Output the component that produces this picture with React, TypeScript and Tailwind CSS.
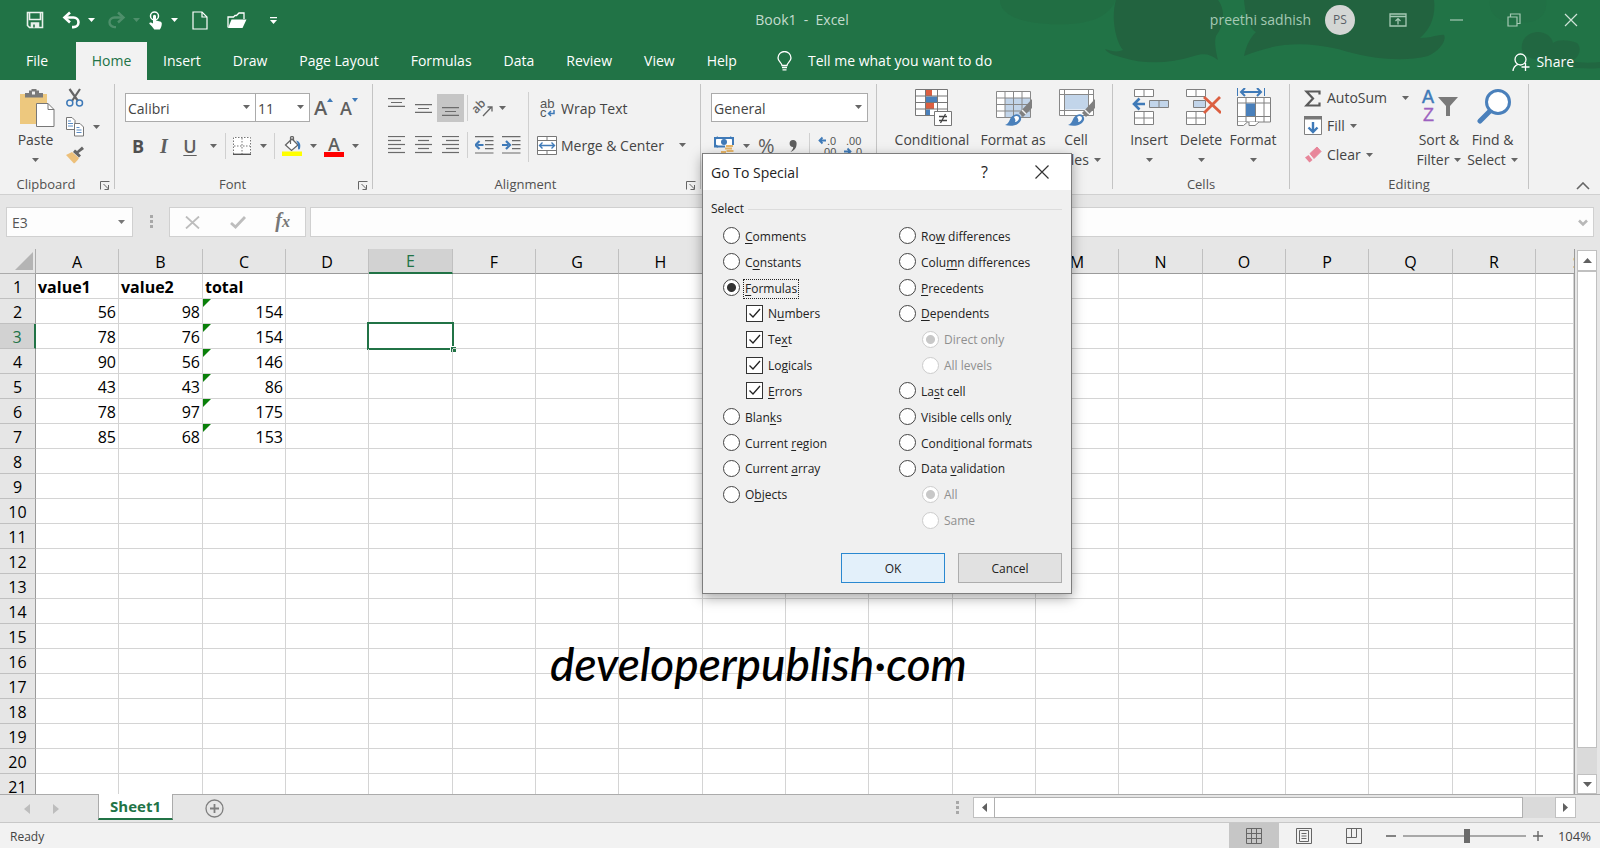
import { useState } from 'react'
import type { ReactNode } from 'react'

const COLUMNS = ['A', 'B', 'C', 'D', 'E', 'F', 'G', 'H', 'I', 'J', 'K', 'L', 'M', 'N', 'O', 'P', 'Q', 'R', 'S']
const ROWS = Array.from({ length: 21 }, (_, i) => i + 1)

const DATA: Record<number, string[]> = {
  1: ['value1', 'value2', 'total'],
  2: ['56', '98', '154'],
  3: ['78', '76', '154'],
  4: ['90', '56', '146'],
  5: ['43', '43', '86'],
  6: ['78', '97', '175'],
  7: ['85', '68', '153'],
}

const TABS = ['Insert', 'Draw', 'Page Layout', 'Formulas', 'Data', 'Review', 'View', 'Help']

// u is the position of the underlined access key, -1 when there is none
type Option = {
  label: string
  u: number
  kind: 'radio' | 'check'
  sub?: boolean
  disabled?: boolean
  group?: string
}

const LEFT_OPTIONS: Option[] = [
  { label: 'Comments', u: 0, kind: 'radio' },
  { label: 'Constants', u: 1, kind: 'radio' },
  { label: 'Formulas', u: 0, kind: 'radio' },
  { label: 'Numbers', u: 1, kind: 'check', sub: true },
  { label: 'Text', u: 2, kind: 'check', sub: true },
  { label: 'Logicals', u: 2, kind: 'check', sub: true },
  { label: 'Errors', u: 0, kind: 'check', sub: true },
  { label: 'Blanks', u: 4, kind: 'radio' },
  { label: 'Current region', u: 8, kind: 'radio' },
  { label: 'Current array', u: 8, kind: 'radio' },
  { label: 'Objects', u: 1, kind: 'radio' },
]

const RIGHT_OPTIONS: Option[] = [
  { label: 'Row differences', u: 2, kind: 'radio' },
  { label: 'Column differences', u: 4, kind: 'radio' },
  { label: 'Precedents', u: 0, kind: 'radio' },
  { label: 'Dependents', u: 0, kind: 'radio' },
  { label: 'Direct only', u: -1, kind: 'radio', sub: true, disabled: true, group: 'levels' },
  { label: 'All levels', u: -1, kind: 'radio', sub: true, disabled: true, group: 'levels' },
  { label: 'Last cell', u: 2, kind: 'radio' },
  { label: 'Visible cells only', u: 17, kind: 'radio' },
  { label: 'Conditional formats', u: 5, kind: 'radio' },
  { label: 'Data validation', u: 5, kind: 'radio' },
  { label: 'All', u: -1, kind: 'radio', sub: true, disabled: true, group: 'validation' },
  { label: 'Same', u: -1, kind: 'radio', sub: true, disabled: true, group: 'validation' },
]

function Arrow({ className = 'text-[#666]' }: { className?: string }) {
  return (
    <svg width="7" height="4" viewBox="0 0 7 4" className={`shrink-0 ${className}`}>
      <path d="M0 0h7L3.5 4z" fill="currentColor" />
    </svg>
  )
}

function Sep({ className = '' }: { className?: string }) {
  return <div className={`w-px shrink-0 bg-[#d0d0d0] ${className}`} />
}

/* ---------- title bar ---------- */

function TitleArt() {
  return (
    <svg className="absolute top-0 right-0 h-20 w-[620px]" viewBox="0 0 620 80" fill="#22633f" aria-hidden="true">
      <path d="M20 0h116c-6 12-16 22-46 24C50 26 20 18 20 0z" opacity=".35" />
      <path d="M136 0h102c8 10 6 26-2 36-2 6 0 16 2 24-8-6-14-7-24-4-24 8-52 8-70 2-10-3-16-4-19-9 8 3 14 3 18 1-8-10-12-34-7-50z" />
      <path d="M264 0h190c2 16-4 30-14 38 12 0 20-4 24-3 3 6-5 16-16 21-28 7-60 2-90-7-36-8-62-6-94 7 2-10 6-18 12-24-4-2-10-10-12-32z" />
      <path d="M510 0h56c2 18-12 24-26 22-18 2-32-6-30-22z" opacity=".2" />
      <path d="M542 50c-2-12 8-18 16-18 8 0 14 5 15 11 6-4 16-3 24 0 6 6 1 16-6 18 8 2 20 2 29 1v6c-20 2-40-2-58-8-10 0-18-4-20-10z" opacity=".7" />
    </svg>
  )
}

function TitleBar() {
  return (
    <header className="relative flex h-10 items-center text-white">
      <div className="flex flex-1 items-center pl-[26px]">
        <button aria-label="Save">
          <svg width="18" height="18" viewBox="0 0 18 18" fill="none" stroke="#e8f1eb" strokeWidth="1.6">
            <path d="M1.5 1.5h15v15h-13l-2-2z" />
            <path d="M3.5 1.5v7h11v-7" />
            <path d="M5.5 16.5V12h7v4.5" fill="#e8f1eb" />
            <path d="M8 13.500v3" stroke="#217346" />
          </svg>
        </button>
        <button aria-label="Undo" className="ml-[18px]">
          <svg width="19" height="18" viewBox="0 0 19 18" fill="none" stroke="#fff" strokeWidth="2.6">
            <path d="M2.5 6.5h9a5 4.8 0 0 1 0 9.6H10" />
            <path d="M8 1.5l-5.500 5 5.500 5" />
          </svg>
        </button>
        <button aria-label="Undo list" className="ml-[7px]"><Arrow className="text-white" /></button>
        <button aria-label="Redo" className="ml-3">
          <svg width="19" height="18" viewBox="0 0 19 18" fill="none" stroke="#4e8f6b" strokeWidth="2.4">
            <path d="M16 6.5H7.5a5 4.8 0 0 0 0 9.6H9" />
            <path d="M11 1.5l5.500 5-5.500 5" />
          </svg>
        </button>
        <button aria-label="Redo list" className="ml-[7px]"><Arrow className="text-[#4e8f6b]" /></button>
        <button aria-label="Touch mode" className="ml-2">
          <svg width="15" height="19" viewBox="0 0 15 19">
            <circle cx="6.5" cy="5" r="4" fill="none" stroke="#fff" strokeWidth="1.5" />
            <path d="M5 5.200a1.500 1.500 0 0 1 3 0v4.300l4 .9c1.200.3 1.800 1 1.800 2.200 0 2.400-.8 4.400-2 5.900H6.300C4.600 16.200 3 14.400 1.300 12.800c0-1.600 1.800-1.800 3.700-.2z" fill="#fff" />
          </svg>
        </button>
        <button aria-label="Touch list" className="ml-2"><Arrow className="text-white" /></button>
        <button aria-label="New" className="ml-3.5">
          <svg width="16" height="19" viewBox="0 0 16 19" fill="none" stroke="#fff" strokeWidth="1.2">
            <path d="M1 1h9l5 5v12H1z" />
            <path d="M10 1v5h5" />
          </svg>
        </button>
        <button aria-label="Open" className="ml-[19px]">
          <svg width="20" height="17" viewBox="0 0 20 17">
            <path d="M1 15.500V5h5.500L8 3.500h1.500L12 1h5v6" fill="none" stroke="#fff" strokeWidth="1.3" />
            <path d="M4.500 7.500h15L15.500 16H1z" fill="#fff" />
          </svg>
        </button>
        <button aria-label="Customize" className="ml-[23px]">
          <svg width="7" height="7" viewBox="0 0 7 7" fill="#fff">
            <path d="M0 0h7v1.200H0zM0 3h7L3.500 7z" />
          </svg>
        </button>
      </div>
      <h1 className="text-sm whitespace-pre text-[#c4dccf]">Book1  -  Excel</h1>
      <div className="flex flex-1 items-center justify-end pr-[22px] text-[#a5c9b4]">
        <span className="text-sm">preethi sadhish</span>
        <button className="ml-3.5 size-[30px] rounded-full bg-[#d3d6d4] text-xs text-[#5a5f66]">PS</button>
        <button aria-label="Ribbon options" className="ml-[34px]">
          <svg width="18" height="14" viewBox="0 0 18 14" fill="none" stroke="currentColor" strokeWidth="1.3">
            <path d="M1 1h16v12H1zM1 3.500h16" />
            <path d="M9 11.500V6M6.500 8L9 5.600 11.500 8" />
          </svg>
        </button>
        <button aria-label="Minimize" className="ml-[43px]">
          <svg width="13" height="14" viewBox="0 0 13 14" stroke="currentColor" strokeWidth="1.2"><path d="M0 7h13" /></svg>
        </button>
        <button aria-label="Restore" className="ml-[44px]">
          <svg width="14" height="14" viewBox="0 0 14 14" fill="none" stroke="currentColor" strokeWidth="1.2">
            <path d="M1 4h9v9H1zM3.500 4V1H13v9.500h-3" />
          </svg>
        </button>
        <button aria-label="Close" className="ml-[43px] text-[#cfe2d7]">
          <svg width="14" height="14" viewBox="0 0 14 14" stroke="currentColor" strokeWidth="1.2"><path d="M1 1l12 12M13 1L1 13" /></svg>
        </button>
      </div>
    </header>
  )
}

function TabBar() {
  return (
    <nav className="relative mt-0.5 flex h-[38px] items-center text-sm text-white">
      <button className="h-full w-[76px] pr-0.5">File</button>
      <button className="h-full w-[71px] bg-[#f2f2f2] font-medium text-[#217346]">Home</button>
      {TABS.map((t) => (
        <button key={t} className="h-full px-4">{t}</button>
      ))}
      <svg width="15" height="20" viewBox="0 0 15 20" className="ml-6" fill="none" stroke="#fff" strokeWidth="1.3">
        <path d="M5 14.500c0-2.500-4-4-4-7.500a6.500 6.500 0 0 1 13 0c0 3.500-4 5-4 7.500z" />
        <path d="M5 16.500h5M5.500 18.800h4" />
      </svg>
      <button className="h-full pl-4">Tell me what you want to do</button>
      <button className="ml-auto flex h-full items-center gap-1.5 pt-0.5 pr-[26px]">
        <svg width="18" height="19" viewBox="0 0 18 19" fill="none" stroke="#fff" strokeWidth="1.3">
          <circle cx="8.5" cy="6.5" r="5.5" />
          <path d="M1 18c.3-3.500 2-5.500 4.800-6.700M13.500 10v8M9.500 14h8" />
        </svg>
        Share
      </button>
    </nav>
  )
}

/* ---------- ribbon ---------- */

function Group({ label, width, launcher, children }: { label: string; width: string; launcher?: boolean; children: ReactNode }) {
  return (
    <>
      <section className={`flex shrink-0 flex-col ${width}`}>
        <div className="flex flex-1 items-start">{children}</div>
        <div className="flex h-5 items-center pt-0.5">
          <span className="flex-1 text-center text-[13px] text-[#505050]">{label}</span>
          {launcher && (
            <button aria-label={`${label} settings`} className="flex w-[22px] justify-end pr-1">
              <svg width="10" height="9" viewBox="0 0 10 9" fill="none" stroke="#666">
                <path d="M.5 8.500v-8h9" />
                <path d="M3.500 3l5 5M8.500 4v4.500h-4" />
              </svg>
            </button>
          )}
        </div>
      </section>
      <div className="mt-1 mb-[5px] w-px shrink-0 bg-[#c4c4c4]" />
    </>
  )
}

function BigButton({ icon, label, second, width }: { icon: ReactNode; label: string; second?: string; width: string }) {
  return (
    <button className={`flex shrink-0 flex-col items-center pt-2 text-sm leading-5 whitespace-nowrap ${width}`}>
      <span className="mb-1 h-[38px] pl-0.5">{icon}</span>
      <span>{label}</span>
      <span className="flex h-5 items-center gap-[5px]">
        {second}
        <Arrow />
      </span>
    </button>
  )
}

function Lines({ rows }: { rows: [number, number][] }) {
  return (
    <svg width="17" height="18" viewBox="0 0 17 18" stroke="#6b6b6b" strokeWidth="1.2">
      {rows.map(([x, w], i) => (
        <path key={i} d={`M${x} ${i * 4 + 0.5}h${w}`} />
      ))}
    </svg>
  )
}

function ThreeLines() {
  return (
    <svg width="17" height="9" viewBox="0 0 17 9" stroke="#6b6b6b" strokeWidth="1.2">
      <path d="M0 .6h17M3 4.500h11M0 8.400h17" />
    </svg>
  )
}

function Indent({ right }: { right?: boolean }) {
  return (
    <svg width="19" height="18" viewBox="0 0 19 18">
      <path d="M0 .6h18.500M10 4.600h8.500M10 8.600h8.500M10 12.600h8.500M0 17h18.500" stroke="#6b6b6b" strokeWidth="1.1" />
      <path d={right ? 'M0 9h6M4 5l4 4-4 4' : 'M8.500 9h-6M4.500 5l-4 4 4 4'} fill="none" stroke="#3f7ab8" strokeWidth="2.2" />
    </svg>
  )
}

function BrushTip() {
  return (
    <g>
      <path d="M37 11v9l-9 9-4-4z" fill="#808080" />
      <path d="M27 22l4 4" stroke="#f2f2f2" strokeWidth="1.5" />
      <path d="M10 37c5-1 4-8 9-10 4-2 8 1 7 5-2 5-9 7-16 5z" fill="#4a80bb" />
      <path d="M19 29c2-2 5-1 5 1s-2 4-4 4c1-2 0-3-1-5z" fill="#fff" />
    </g>
  )
}

function ClipboardGroup() {
  return (
    <Group label="Clipboard" width="w-[114px]" launcher>
      <div className="ml-4 flex">
        <BigButton
          width="w-[39px]"
          label="Paste"
          icon={
            <svg width="36" height="39" viewBox="0 0 36 39">
              <path d="M1 6h27v30H1z" fill="#edc87e" />
              <path d="M6 5h4V2.500h2.500V1h5v1.500H20V5h4v4.500H6z" fill="#7a7a7a" />
              <path d="M13 3.500h3v3h-3z" fill="#f2f2f2" />
              <path d="M17.500 15.500H29l6 6v17H17.500z" fill="#fff" stroke="#777" />
              <path d="M29 15.500v6h6" fill="none" stroke="#777" />
            </svg>
          }
        />
        <div className="ml-[11px] flex flex-col pt-2">
          <button aria-label="Cut">
            <svg width="18" height="20" viewBox="0 0 18 20" fill="none">
              <path d="M3.500 1L12 13M14 1L6 13" stroke="#666" strokeWidth="2.2" />
              <circle cx="3.8" cy="15" r="3" stroke="#3f7ab8" strokeWidth="1.5" />
              <circle cx="13.5" cy="15" r="3" stroke="#3f7ab8" strokeWidth="1.5" />
            </svg>
          </button>
          <button aria-label="Copy" className="mt-[9px] flex items-center gap-[9px]">
            <svg width="18" height="20" viewBox="0 0 18 20" fill="#fff" stroke="#777">
              <path d="M.5.5H6l3 3v9H.5z" />
              <path d="M8.500 6.500H14l3.500 3.500v9h-9z" />
              <path d="M2 4h3M2 6.500h5M2 9h5M10.500 10.500h3M10.500 13h5M10.500 15.500h5" stroke="#5a8cc4" />
            </svg>
            <Arrow />
          </button>
          <button aria-label="Format painter" className="mt-[9px]">
            <svg width="19" height="18" viewBox="0 0 19 18">
              <path d="M0 9l6-3 7 6c-2 3-3 4-5 5.500z" fill="#edc07a" />
              <path d="M7 6l6 5.500 2-2L12.500 7 18 3 16 .5 11 5 9 3.500z" fill="#666" />
            </svg>
          </button>
        </div>
      </div>
    </Group>
  )
}

function FontGroup() {
  return (
    <Group label="Font" width="w-[257px]" launcher>
      <div className="ml-2.5 pt-[13px]">
        <div className="flex h-[29px] items-center">
          <div className="relative h-full">
            <select aria-label="Font" className="h-full w-[131px] appearance-none border border-[#ababab] bg-white px-0.5 pt-0.5 text-sm">
              <option>Calibri</option>
            </select>
            <Arrow className="pointer-events-none absolute top-3 right-[6px] text-[#666]" />
          </div>
          <div className="relative h-full">
            <select aria-label="Font size" className="-ml-px h-full w-[55px] appearance-none border border-[#ababab] bg-white px-0.5 pt-0.5 text-sm">
              <option>11</option>
            </select>
            <Arrow className="pointer-events-none absolute top-3 right-[6px] text-[#666]" />
          </div>
          <button aria-label="Grow font" className="ml-1 flex w-[18px] items-start text-xl leading-6 font-semibold text-[#5f5f5f]">
            A
            <svg width="6" height="4" viewBox="0 0 6 4" className="mt-0.5 shrink-0"><path d="M0 4h6L3 0z" fill="#3f7ab8" /></svg>
          </button>
          <button aria-label="Shrink font" className="ml-2 flex w-[18px] items-start text-lg leading-6 font-semibold text-[#5f5f5f]">
            A
            <svg width="6" height="4" viewBox="0 0 6 4" className="mt-0.5 shrink-0"><path d="M0 0h6L3 4z" fill="#3f7ab8" /></svg>
          </button>
        </div>
        <div className="mt-2.5 flex h-7 items-center">
          <button className="w-[26px] text-lg font-bold text-[#4f4f4f]">B</button>
          <button className="w-[26px] font-['Liberation_Serif'] text-xl font-bold text-[#5f5f5f] italic">I</button>
          <button className="w-[26px] text-lg leading-5 font-semibold text-[#5f5f5f] underline underline-offset-2">U</button>
          <button aria-label="Underline list" className="ml-[7px]"><Arrow /></button>
          <Sep className="ml-2 h-[26px]" />
          <button aria-label="Borders" className="ml-[7px]">
            <svg width="18" height="18" viewBox="0 0 18 18" fill="none">
              <path d="M0 0h18v18H0z" fill="#fff" />
              <path d="M.5 17V.5h17V17M9 1v16M1 9h16" stroke="#777" strokeDasharray="1.5 1.5" />
              <path d="M0 17.300h18" stroke="#555" strokeWidth="1.4" />
            </svg>
          </button>
          <button aria-label="Borders list" className="ml-[9px]"><Arrow /></button>
          <Sep className="ml-[7px] h-[26px]" />
          <button aria-label="Fill color" className="ml-[7px]">
            <svg width="20" height="20" viewBox="0 0 20 20">
              <path d="M3.500 9L10 3l6 6-6.500 5.500z" fill="#fff" stroke="#666" strokeWidth="1.3" />
              <path d="M8.500 8V1.500c0-1.300 3-1.300 3 0V5" fill="none" stroke="#666" strokeWidth="1.2" />
              <path d="M14 4.500c4 1 5 4 4 8-.5 1.500-2 1.500-2-.5 0-2 .5-4-2-7.500z" fill="#3f7ab8" />
              <path d="M0 15.500h20V20H0z" fill="#ff0" />
            </svg>
          </button>
          <button aria-label="Fill list" className="ml-2"><Arrow /></button>
          <button aria-label="Font color" className="ml-[7px] flex w-5 flex-col items-center text-lg leading-4 font-semibold text-[#5f5f5f]">
            A
            <span className="h-[5px] w-5 bg-[#f00]" />
          </button>
          <button aria-label="Font color list" className="ml-2"><Arrow /></button>
        </div>
      </div>
    </Group>
  )
}

function AlignmentGroup() {
  return (
    <Group label="Alignment" width="w-[327px]" launcher>
      <div className="ml-2.5 pt-3.5">
        <div className="flex h-7 items-center">
          <button aria-label="Top align" className="flex h-full w-[27px] justify-center pt-1"><ThreeLines /></button>
          <button aria-label="Middle align" className="flex h-full w-[27px] items-center justify-center"><ThreeLines /></button>
          <button aria-label="Bottom align" className="flex h-full w-[27px] items-end justify-center bg-[#c6c6c6] pb-[6px]"><ThreeLines /></button>
          <Sep className="ml-[3px] h-[26px]" />
          <button aria-label="Orientation" className="ml-[7px] flex items-center gap-1.5">
            <svg width="18" height="18" viewBox="0 0 18 18" className="overflow-visible">
              <text x="-1" y="12" fontSize="12" fontWeight="600" fill="#666" transform="rotate(-45 4 11)">ab</text>
              <path d="M8 17l8.500-9M12.500 8H17v4.500" fill="none" stroke="#666" strokeWidth="1.3" />
            </svg>
            <Arrow />
          </button>
        </div>
        <div className="mt-[9px] flex h-7 items-center">
          <button aria-label="Align left" className="flex w-[27px] justify-center"><Lines rows={[[0, 17], [0, 13], [0, 17], [0, 13], [0, 17]]} /></button>
          <button aria-label="Center" className="flex w-[27px] justify-center"><Lines rows={[[0, 17], [3, 11], [0, 17], [3, 11], [0, 17]]} /></button>
          <button aria-label="Align right" className="flex w-[27px] justify-center"><Lines rows={[[0, 17], [4, 13], [0, 17], [4, 13], [0, 17]]} /></button>
          <Sep className="ml-[3px] h-[26px]" />
          <button aria-label="Decrease indent" className="ml-[7px]"><Indent /></button>
          <button aria-label="Increase indent" className="ml-2"><Indent right /></button>
        </div>
      </div>
      <Sep className="mt-3 ml-[7px] h-[70px]" />
      <div className="ml-2 pt-4 text-sm">
        <button className="flex h-6 items-center gap-[5px] pl-[3px]">
          <svg width="16" height="19" viewBox="0 0 16 19" className="overflow-visible font-['Liberation_Sans']">
            <text x="0" y="9" fontSize="13" fill="#555">ab</text>
            <text x="0" y="18" fontSize="13" fill="#555">c</text>
            <path d="M14 11v3.500H9M11 12l-2.500 2.500L11 17" fill="none" stroke="#3f7ab8" strokeWidth="1.5" />
          </svg>
          <span className="pt-0.5">Wrap Text</span>
        </button>
        <button className="mt-[13px] flex h-6 items-center gap-1">
          <svg width="20" height="19" viewBox="0 0 20 19" fill="#fff" stroke="#777">
            <path d="M.5.5h19v18H.5zM.5 4.500h19M.5 14.500h19M10 .5v4M10 14.500v4" />
            <path d="M2.500 9.500h15M5.500 6.500l-3 3 3 3M14.500 6.500l3 3-3 3" fill="none" stroke="#3f7ab8" strokeWidth="1.4" />
          </svg>
          <span className="pt-0.5">Merge &amp; Center</span>
          <Arrow className="ml-[11px] text-[#666]" />
        </button>
      </div>
    </Group>
  )
}

function NumberGroup() {
  return (
    <Group label="Number" width="w-[175px]" launcher>
      <div className="ml-2.5 pt-[13px]">
        <div className="relative h-[29px] w-[157px]">
          <select aria-label="Number format" className="h-full w-full appearance-none border border-[#ababab] bg-white px-0.5 pt-0.5 text-sm">
            <option>General</option>
          </select>
          <Arrow className="pointer-events-none absolute top-3 right-1.5 text-[#666]" />
        </div>
        <div className="mt-2.5 flex h-7 items-center pl-[3px]">
          <button aria-label="Accounting" className="flex items-center gap-[9px]">
            <svg width="20" height="20" viewBox="0 0 20 20">
              <path d="M1 2h18v8.500H1z" fill="#fff" stroke="#3f7ab8" strokeWidth="2" />
              <circle cx="10" cy="6" r="3" fill="#3f7ab8" />
              <path d="M1 3l3-2M19 3l-3-2M1 9l3 2" stroke="#3f7ab8" strokeWidth="2" />
              <path d="M11 9h9v10h-9z" fill="#f2f2f2" />
              <path d="M12 10h7M11 12.500h7M12.500 15h7M7 16h5M7 18.500h6" stroke="#e8b76a" strokeWidth="1.8" />
            </svg>
            <Arrow />
          </button>
          <button className="ml-2 text-xl text-[#5f5f5f]">%</button>
          <button aria-label="Comma" className="ml-3.5">
            <svg width="8" height="12" viewBox="0 0 8 12"><path d="M4 0a3.500 3.500 0 0 1 3.600 3.800C7.600 8 5 11 1.500 12c1.700-1.700 2.600-3 2.700-5A3.500 3.500 0 1 1 4 0z" fill="#5f5f5f" /></svg>
          </button>
          <Sep className="ml-3 h-[26px]" />
          <button aria-label="Increase decimal" className="ml-2">
            <svg width="18" height="20" viewBox="0 0 18 20" fontSize="11" fill="#555" className="overflow-visible font-['Liberation_Sans']">
              <text x="9" y="9">.0</text>
              <text x="3" y="20">.00</text>
              <path d="M8 4.500H2M4.500 1.500l-3 3 3 3" fill="none" stroke="#3f7ab8" strokeWidth="1.8" />
            </svg>
          </button>
          <button aria-label="Decrease decimal" className="ml-2">
            <svg width="18" height="20" viewBox="0 0 18 20" fontSize="11" fill="#555" className="overflow-visible font-['Liberation_Sans']">
              <text x="2" y="9">.00</text>
              <text x="9" y="20">.0</text>
              <path d="M0 15.500h6M3.500 12.500l3 3-3 3" fill="none" stroke="#3f7ab8" strokeWidth="1.8" />
            </svg>
          </button>
        </div>
      </div>
    </Group>
  )
}

function StylesGroup() {
  return (
    <Group label="Styles" width="w-[235px]">
      <div className="ml-[15px] flex">
        <BigButton
          width="w-20"
          label="Conditional"
          second="Formatting"
          icon={
            <svg width="38" height="38" viewBox="0 0 38 38">
              <path d="M1.500 1.500h32v26h-32z" fill="#fff" />
              <path d="M12 2h6v6h-6zM12 15h8v6h-8z" fill="#dc5f41" />
              <path d="M12 8.500h11v6H12zM12 21.500h4v6h-4z" fill="#4a80bb" />
              <path d="M1.500 1.500h32v26h-32zM1.500 8h32M1.500 14.500h32M1.500 21h32M11.500 1.500v26M23.500 1.500v26" fill="none" stroke="#777" />
              <path d="M20.500 23.500h17v14h-17z" fill="#fff" stroke="#777" />
              <path d="M25 28.500h8M25 32.500h8M31.500 26l-5 9" stroke="#444" strokeWidth="1.3" />
            </svg>
          }
        />
        <BigButton
          width="w-[82px]"
          label="Format as"
          second="Table"
          icon={
            <svg width="38" height="38" viewBox="0 0 38 38">
              <path d="M1.500 3.500h34v26h-34z" fill="#fff" />
              <path d="M10 10h25.500v19.500H10z" fill="#c2d5ea" />
              <path d="M1.500 3.500h34v26h-34zM1.500 10h34M1.500 16.500h34M1.500 23h34M10 3.500v26M18.500 3.500v26M27 3.500v26" fill="none" stroke="#888" />
              <BrushTip />
            </svg>
          }
        />
        <BigButton
          width="w-11"
          label="Cell"
          second="Styles"
          icon={
            <svg width="38" height="38" viewBox="0 0 38 38">
              <path d="M1.500 1.500h34v26h-34z" fill="#fff" />
              <path d="M7 7h23v14.500H7z" fill="#c2d5ea" />
              <path d="M1.500 1.500h34v26h-34zM1.500 6.500h34M1.500 22.500h34M6.500 1.500v26M30.500 1.500v26" fill="none" stroke="#888" />
              <BrushTip />
            </svg>
          }
        />
      </div>
    </Group>
  )
}

function CellsGroup() {
  return (
    <Group label="Cells" width="w-[176px]">
      <div className="ml-2.5 flex">
        <BigButton
          width="w-[52px]"
          label="Insert"
          icon={
            <svg width="37" height="38" viewBox="0 0 37 38" fill="#fff" stroke="#808080">
              <path d="M2.500 1.500h19v7h-19zM12 1.500v7M2.500 23.500h19v13h-19zM12 23.500v13M2.500 30h19" />
              <path d="M17.500 12.500h19v7h-19zM27 12.500v7" fill="#c2d5ea" />
              <path d="M13 16H2M7.500 10.500L2 16l5.500 5.500" fill="none" stroke="#3f7ab8" strokeWidth="2.6" />
            </svg>
          }
        />
        <BigButton
          width="w-[52px]"
          label="Delete"
          icon={
            <svg width="37" height="38" viewBox="0 0 37 38" fill="#fff" stroke="#808080">
              <path d="M2.500 1.500h19v7h-19zM12 1.500v7M2.500 23.500h19v13h-19zM12 23.500v13M2.500 30h19" />
              <path d="M9.500 12.500h12v7h-12z" fill="#c2d5ea" />
              <path d="M20 9l17 16M36 9L20 25" stroke="#dc5f41" strokeWidth="2.8" />
            </svg>
          }
        />
        <BigButton
          width="w-[52px]"
          label="Format"
          icon={
            <svg width="36" height="38" viewBox="0 0 36 38" fill="#fff" stroke="#808080">
              <path d="M1.500 9.500h33V34h-33z" />
              <path d="M1.500 15h33M1.500 28.500h33M10 9.500V34M19.500 9.500V34M28 9.500V34" />
              <path d="M1.500 34v3.500h6l4-3.500M13 34v3.500h6l4-3.500" />
              <path d="M10 15.500h9V28h-9z" fill="#4a80bb" stroke="none" />
              <path d="M1.500 0v8M28.500 0v8" stroke="#3f7ab8" />
              <path d="M5 4h20M9 0L5 4l4 4M21 0l4 4-4 4" fill="none" stroke="#3f7ab8" strokeWidth="2" />
            </svg>
          }
        />
      </div>
    </Group>
  )
}

function EditingGroup() {
  return (
    <Group label="Editing" width="w-[238px]">
      <div className="ml-3.5 w-[106px] pt-1 text-sm">
        <button className="flex h-7 items-center gap-[5px]">
          <svg width="18" height="17" viewBox="0 0 18 17"><path d="M15.500 4.500v-3h-13l6.500 7-6.500 7h13v-3" fill="none" stroke="#5a5a5a" strokeWidth="2.2" /></svg>
          AutoSum
          <Arrow className="ml-2.5 text-[#666]" />
        </button>
        <button className="flex h-7 items-center gap-[5px]">
          <svg width="18" height="20" viewBox="0 0 18 20">
            <path d="M.5.5h17v18H.5z" fill="#fff" stroke="#808080" />
            <path d="M0 0h18v3.500H0z" fill="#777" />
            <path d="M9 6v10M4.500 11.500L9 16l4.500-4.500" fill="none" stroke="#3f7ab8" strokeWidth="2.4" />
          </svg>
          Fill
          <Arrow />
        </button>
        <button className="flex h-[30px] items-center gap-[5px]">
          <svg width="18" height="18" viewBox="0 0 18 18">
            <path d="M6 7.500L13 1l4 4.500-7 7z" fill="#e8869a" stroke="#e8869a" strokeLinejoin="round" />
            <path d="M4.500 9l4 5-3 2.500L1 11.500z" fill="#e8869a" />
          </svg>
          Clear
          <Arrow />
        </button>
      </div>
      <BigButton
        width="w-[58px]"
        label="Sort &amp;"
        second="Filter"
        icon={
          <svg width="36" height="38" viewBox="0 0 36 38" className="overflow-visible font-['Liberation_Sans']">
            <text x="0" y="15" fontSize="18" fill="#3f7ab8" stroke="#3f7ab8" strokeWidth=".5">A</text>
            <text x="1" y="33" fontSize="18" fill="#9c62c0" stroke="#9c62c0" strokeWidth=".3">Z</text>
            <path d="M16 9h20l-8 9v10h-4V18z" fill="#7a7a7a" />
          </svg>
        }
      />
      <BigButton
        width="w-[49px]"
        label="Find &amp;"
        second="Select"
        icon={
          <svg width="34" height="36" viewBox="0 0 34 36">
            <path d="M14 22L3 33" stroke="#4a80bb" strokeWidth="5" strokeLinecap="round" />
            <circle cx="21" cy="14" r="11.5" fill="#fff" stroke="#4a80bb" strokeWidth="3" />
          </svg>
        }
      />
    </Group>
  )
}

function Ribbon() {
  return (
    <div className="flex h-[115px] shrink-0 border-b border-[#d0d0d0] bg-[#f2f2f2] text-[#444]">
      <ClipboardGroup />
      <FontGroup />
      <AlignmentGroup />
      <NumberGroup />
      <StylesGroup />
      <CellsGroup />
      <EditingGroup />
      <button aria-label="Collapse ribbon" className="mt-auto ml-auto pr-2.5 pb-1">
        <svg width="14" height="8" viewBox="0 0 14 8" fill="none" stroke="#666" strokeWidth="1.6"><path d="M1 7l6-6 6 6" /></svg>
      </button>
    </div>
  )
}

function Dots() {
  return (
    <svg width="3" height="14" viewBox="0 0 3 14" fill="#a8a8a8">
      <path d="M0 0h3v3H0zM0 5h3v3H0zM0 10h3v3H0z" />
    </svg>
  )
}

function FormulaBar() {
  return (
    <div className="flex h-[54px] shrink-0 items-center px-1.5">
      <div className="relative">
        <input aria-label="Name box" defaultValue="E3" className="h-[30px] w-[127px] border border-[#d0d0d0] bg-[#fdfdfd] px-[5px] text-sm text-[#555]" />
        <Arrow className="absolute top-[13px] right-2 text-[#777]" />
      </div>
      <div className="flex w-9 justify-center"><Dots /></div>
      <div className="flex h-[30px] w-[137px] items-center justify-between border border-[#d0d0d0] bg-[#fdfdfd] px-[15px]">
        <button aria-label="Cancel entry">
          <svg width="15" height="13" viewBox="0 0 15 13" stroke="#bdbdbd" strokeWidth="1.8"><path d="M1 .5l13 12M14 .5l-13 12" /></svg>
        </button>
        <button aria-label="Enter">
          <svg width="16" height="13" viewBox="0 0 16 13" fill="none" stroke="#bdbdbd" strokeWidth="2.8"><path d="M1 7l4.500 4L15 1" /></svg>
        </button>
        <button className="font-['Liberation_Serif'] text-xl leading-5 font-bold text-[#777] italic">
          f<span className="text-base">x</span>
        </button>
      </div>
      <div className="relative ml-1 flex-1">
        <input aria-label="Formula bar" className="block h-[30px] w-full border border-[#d0d0d0] bg-[#fdfdfd] px-2 text-sm" />
        <svg width="10" height="8" viewBox="0 0 10 8" fill="none" stroke="#b8b8b8" strokeWidth="2.6" className="absolute top-3 right-1.5">
          <path d="M1 1.500l4 4 4-4" />
        </svg>
      </div>
    </div>
  )
}

/* ---------- sheet ---------- */

function Sheet() {
  return (
    <div className="relative min-w-0 flex-1 overflow-hidden border-r border-[#9b9b9b] bg-white">
      <table className="w-full table-fixed border-separate border-spacing-0 text-base leading-[22px] text-black">
        <colgroup>
          <col className="w-9" />
          {COLUMNS.map((c, i) => (
            <col key={c} className={c === 'S' ? 'w-[38px]' : i % 3 === 1 ? 'w-[84px]' : 'w-[83px]'} />
          ))}
        </colgroup>
        <thead>
          <tr className="h-[25px] bg-[#e6e6e6]">
            <th className="border-r border-b border-[#ababab] p-0">
              <svg width="18" height="18" viewBox="0 0 18 18" className="ml-[15px]"><path d="M18 0v18H0z" fill="#b4b4b4" /></svg>
            </th>
            {COLUMNS.map((c) => (
              <th
                key={c}
                className={
                  c === 'E'
                    ? 'border-r border-b-2 border-r-[#c0c0c0] border-b-[#217346] bg-[#d2d2d2] p-0 pt-px font-normal text-[#217346]'
                    : c === 'S'
                      ? 'overflow-hidden border-b border-[#9b9b9b] p-0 pt-0.5 font-normal'
                      : 'border-r border-b border-r-[#c0c0c0] border-b-[#9b9b9b] p-0 pt-0.5 font-normal'
                }
              >
                {c === 'S' ? <div className="w-[83px]">S</div> : c}
              </th>
            ))}
          </tr>
        </thead>
        <tbody>
          {ROWS.map((r) => (
            <tr key={r} className="h-[25px]">
              <th
                className={
                  r === 3
                    ? 'border-r-2 border-b border-r-[#217346] border-b-[#c0c0c0] bg-[#d2d2d2] p-0 pt-0.5 font-normal text-[#217346]'
                    : 'border-r border-b border-r-[#9b9b9b] border-b-[#c0c0c0] bg-[#e6e6e6] p-0 pt-0.5 font-normal'
                }
              >
                {r}
              </th>
              {COLUMNS.map((c, i) => {
                const value = DATA[r]?.[i]
                const flagged = c === 'C' && r > 1 && value
                return (
                  <td
                    key={c}
                    className={`relative border-r border-b border-[#d4d4d4] px-0.5 pt-0.5 pb-0 ${r === 1 ? 'font-bold' : 'text-right'}`}
                  >
                    {flagged && (
                      <svg width="8" height="8" viewBox="0 0 8 8" className="absolute top-0 left-0"><path d="M0 0h8L0 8z" fill="#0a800a" /></svg>
                    )}
                    {value}
                    {c === 'E' && r === 3 && (
                      <div className="absolute -inset-0.5 border-2 border-[#217346]">
                        <div className="absolute -right-1 -bottom-1 size-[6px] border-t border-l border-white bg-[#217346]" />
                      </div>
                    )}
                  </td>
                )
              })}
            </tr>
          ))}
        </tbody>
      </table>
      <p className="absolute top-[385px] left-[550px] font-['Lato'] text-[46px] leading-[60px] font-medium text-black italic">
        developerpublish·com
      </p>
    </div>
  )
}

function ScrollButton({ d, label, className }: { d: string; label: string; className: string }) {
  return (
    <button aria-label={label} className={`flex shrink-0 items-center justify-center border border-[#c0c0c0] bg-white ${className}`}>
      <svg width="9" height="9" viewBox="0 0 9 9"><path d={d} fill="#606060" /></svg>
    </button>
  )
}

function VerticalScroll() {
  return (
    <div className="mt-px mr-[3px] ml-0.5 flex w-5 shrink-0 flex-col bg-[#dadada]">
      <ScrollButton label="Scroll up" d="M0 7h9L4.500 2z" className="h-[21px]" />
      <div className="flex-1 border border-[#c0c0c0] bg-white" />
      <div className="h-[26px]" />
      <ScrollButton label="Scroll down" d="M0 2h9L4.500 7z" className="h-5" />
    </div>
  )
}

function SheetTabs() {
  return (
    <div className="flex h-7 shrink-0 items-start border-t border-[#ababab]">
      <div className="flex h-full w-[98px] items-center gap-[23px] pl-6">
        <svg width="6" height="10" viewBox="0 0 6 10"><path d="M6 0v10L0 5z" fill="#bdbdbd" /></svg>
        <svg width="6" height="10" viewBox="0 0 6 10"><path d="M0 0v10l6-5z" fill="#bdbdbd" /></svg>
      </div>
      <button className="-mt-px h-[26px] w-[75px] border-x border-b-2 border-x-[#ababab] border-b-[#217346] bg-white text-[15px] leading-5 font-bold text-[#217346]">
        Sheet1
      </button>
      <button aria-label="New sheet" className="mt-1 ml-8">
        <svg width="19" height="19" viewBox="0 0 19 19" fill="none" stroke="#7f7f7f">
          <circle cx="9.5" cy="9.5" r="8.5" strokeWidth="1.3" />
          <path d="M9.500 5v9M5 9.500h9" strokeWidth="1.8" />
        </svg>
      </button>
      <div className="mt-[6px] mr-[14px] ml-auto"><Dots /></div>
      <div className="mt-0.5 mr-6 flex h-[21px] w-[603px] bg-[#dadada]">
        <ScrollButton label="Scroll left" d="M7 0v9L2 4.500z" className="w-[22px]" />
        <div className="-ml-px flex-1 border border-[#b0b0b0] bg-white" />
        <div className="w-8" />
        <ScrollButton label="Scroll right" d="M2 0v9l5-4.500z" className="w-[21px]" />
      </div>
    </div>
  )
}

function StatusBar() {
  const [zoom, setZoom] = useState(104)

  return (
    <footer className="flex h-[26px] shrink-0 items-center border-t border-[#c8c8c8] bg-[#f2f2f2] text-xs text-[#444]">
      <span className="flex-1 pt-0.5 pl-2.5">Ready</span>
      <button aria-label="Normal view" className="flex h-full w-[50px] items-center justify-center bg-[#c6c6c6]">
        <svg width="16" height="16" viewBox="0 0 16 16" fill="none" stroke="#666"><path d="M.5.5h15v15H.5zM.5 5.500h15M.5 10.500h15M5.500.5v15M10.500.5v15" /></svg>
      </button>
      <button aria-label="Page layout view" className="flex h-full w-[50px] items-center justify-center">
        <svg width="16" height="16" viewBox="0 0 16 16" fill="none" stroke="#666"><path d="M.5.5h15v15H.5zM3.500 2.500h9v11h-9zM5.500 5.500h5M5.500 8h5M5.500 10.500h5" /></svg>
      </button>
      <button aria-label="Page break view" className="flex h-full w-[50px] items-center justify-center">
        <svg width="16" height="16" viewBox="0 0 16 16" fill="none" stroke="#666"><path d="M.5.5h15v15H.5zM.5 9.500h10M5.500.5v9M10.500.5v9" /></svg>
      </button>
      <button aria-label="Zoom out" className="ml-[7px]">
        <svg width="10" height="10" viewBox="0 0 10 10" stroke="#666" strokeWidth="1.6"><path d="M0 5h10" /></svg>
      </button>
      <input
        type="range"
        aria-label="Zoom"
        min={10}
        max={190}
        value={zoom}
        onChange={(e) => setZoom(Number(e.target.value))}
        className="mx-[7px] h-4 w-[123px] appearance-none bg-[linear-gradient(#a8a8a8,#a8a8a8)] bg-[length:100%_2px] bg-center bg-no-repeat [&::-webkit-slider-thumb]:h-3.5 [&::-webkit-slider-thumb]:w-[6px] [&::-webkit-slider-thumb]:appearance-none [&::-webkit-slider-thumb]:bg-[#6b6b6b]"
      />
      <button aria-label="Zoom in">
        <svg width="10" height="10" viewBox="0 0 10 10" stroke="#666" strokeWidth="1.4"><path d="M0 5h10M5 0v10" /></svg>
      </button>
      <span className="w-[57px] pt-0.5 pr-[9px] text-right text-[13px]">{zoom}%</span>
    </footer>
  )
}

/* ---------- dialog ---------- */

type OptionRowProps = { option: Option; checked: boolean; focused?: boolean; onChange: () => void }

function OptionRow({ option, checked, focused, onChange }: OptionRowProps) {
  const { label, u } = option
  const text = u < 0 ? label : <>{label.slice(0, u)}<u className="underline-offset-2">{label[u]}</u>{label.slice(u + 1)}</>

  return (
    <label className={`flex items-center ${option.sub ? 'pl-[23px]' : ''} ${option.disabled ? 'text-[#8f8f8f]' : ''}`}>
      {option.kind === 'radio' ? (
        <input
          type="radio"
          name={option.group ?? 'target'}
          checked={checked}
          disabled={option.disabled}
          onChange={onChange}
          className="size-[17px] shrink-0 appearance-none rounded-full border border-[#444] bg-white text-[#333] checked:bg-[radial-gradient(circle,currentColor_0_4px,white_5px)] disabled:border-[#ccc] disabled:text-[#c8c8c8]"
        />
      ) : (
        <span className="relative size-[17px] shrink-0">
          <input type="checkbox" checked={checked} onChange={onChange} className="peer block size-[17px] appearance-none border border-[#333] bg-white" />
          <svg viewBox="0 0 17 17" fill="none" stroke="#222" strokeWidth="1.3" className="pointer-events-none absolute inset-0 hidden peer-checked:block">
            <path d="M3.500 8.500L7 12l7-8" />
          </svg>
        </span>
      )}
      <span className={`mt-0.5 ml-1 px-px leading-[18px] ${focused ? 'outline-1 outline-dotted outline-[#222]' : ''}`}>{text}</span>
    </label>
  )
}

function GoToSpecial() {
  const [target, setTarget] = useState('Formulas')
  const [types, setTypes] = useState(['Numbers', 'Text', 'Logicals', 'Errors'])

  const isChecked = (o: Option) => {
    if (o.kind === 'check') return types.includes(o.label)
    if (o.disabled) return o.label === 'Direct only' || o.label === 'All'
    return target === o.label
  }

  const handleChange = (o: Option) => {
    if (o.kind === 'radio') setTarget(o.label)
    else setTypes((t) => (t.includes(o.label) ? t.filter((x) => x !== o.label) : [...t, o.label]))
  }

  return (
    <div
      role="dialog"
      aria-label="Go To Special"
      className="absolute top-[153px] left-[702px] w-[370px] border border-[#7d7d7d] bg-[#f0f0f0] text-xs text-[#222] shadow-[0_4px_12px_rgba(0,0,0,0.35)]"
    >
      <div className="flex h-9 items-center bg-white pr-[22px] pl-2">
        <h2 className="flex-1 pt-0.5 text-sm">Go To Special</h2>
        <button aria-label="Help" className="text-base">?</button>
        <button aria-label="Close dialog" className="ml-[47px]">
          <svg width="14" height="14" viewBox="0 0 14 14" stroke="#333" strokeWidth="1.2"><path d="M.5.5l13 13M13.500.5l-13 13" /></svg>
        </button>
      </div>
      <fieldset className="pt-2.5">
        <div className="flex items-center gap-1 pr-[9px] pl-2">
          <span className="leading-[18px]">Select</span>
          <div className="h-px flex-1 bg-[#dcdcdc]" />
        </div>
        <div className="mt-[5px] grid h-[310px] grid-flow-col grid-cols-[176px_1fr] grid-rows-12 pl-5">
          {LEFT_OPTIONS.map((o) => (
            <OptionRow key={o.label} option={o} checked={isChecked(o)} focused={o.label === 'Formulas'} onChange={() => handleChange(o)} />
          ))}
          <div />
          {RIGHT_OPTIONS.map((o) => (
            <OptionRow key={o.label} option={o} checked={isChecked(o)} onChange={() => handleChange(o)} />
          ))}
        </div>
      </fieldset>
      <div className="flex justify-end gap-[13px] pt-5 pr-[9px] pb-2.5">
        <button className="h-[30px] w-[104px] border border-[#2a88d0] bg-[#e3f0fa] pt-0.5">OK</button>
        <button className="h-[30px] w-[104px] border border-[#adadad] bg-[#e1e1e1] pt-0.5">Cancel</button>
      </div>
    </div>
  )
}

export default function App() {
  return (
    <div className="relative flex h-screen flex-col overflow-hidden bg-[#e6e6e6] font-['Open_Sans','Noto_Sans',sans-serif]">
      <div className="relative h-20 shrink-0 bg-[#217346]">
        <TitleArt />
        <TitleBar />
        <TabBar />
      </div>
      <Ribbon />
      <FormulaBar />
      <main className="flex min-h-0 flex-1">
        <Sheet />
        <VerticalScroll />
      </main>
      <SheetTabs />
      <StatusBar />
      <GoToSpecial />
    </div>
  )
}
